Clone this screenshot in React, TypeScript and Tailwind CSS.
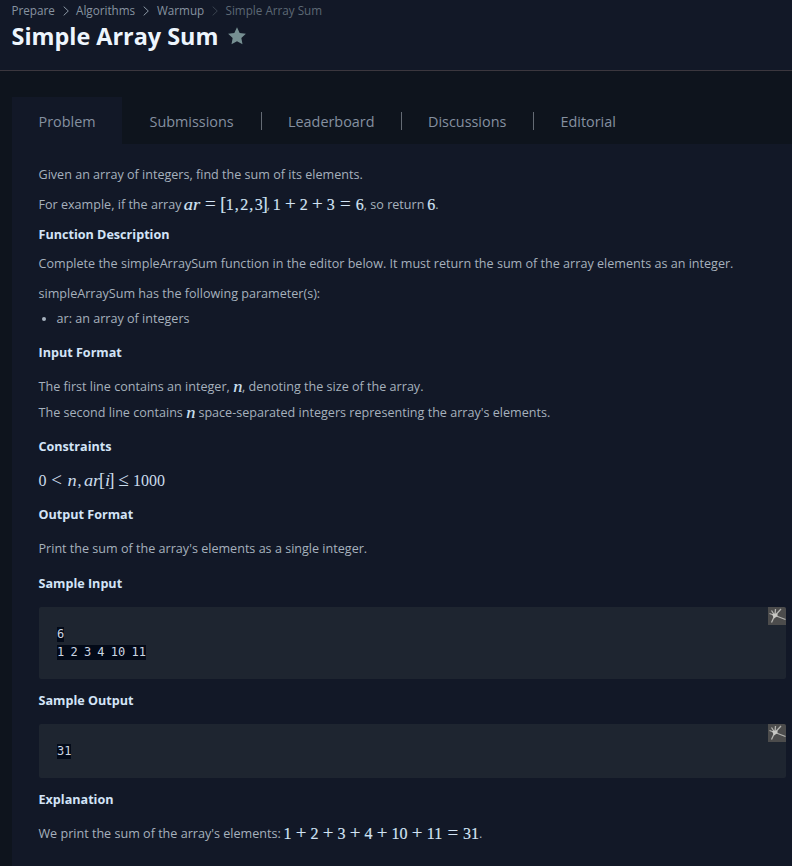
import React from "react";

type Token = [text: string, width: number, italic?: boolean];

function tokenStyle(text: string, italic?: boolean) {
  if (italic) return "justify-center italic text-[16px] scale-x-[1.15]";
  if ("+=<≤".includes(text)) return "justify-center text-[19px]";
  if ("[]".includes(text)) return "justify-center text-[18px]";
  if (text === ",") return "justify-start pl-[1px]";
  return "justify-center";
}

function MathText({ tokens, light = false }: { tokens: Token[]; light?: boolean }) {
  return (
    <span
      className={`relative -top-[0.5px] inline-flex h-[20px] items-baseline whitespace-pre align-top font-['Liberation_Serif',serif] text-[16px] leading-[20px] ${
        light ? "text-[#cbdcec]" : "-ml-[0.5px] text-[#d3e4f5] [-webkit-text-stroke:0.15px]"
      }`}
    >
      <span className="h-[16.4px] w-0" />
      {tokens.map(([text, width, italic], i) => (
        <span key={i} className={`inline-flex shrink-0 ${tokenStyle(text, italic)}`} style={{ width }}>
          {text}
        </span>
      ))}
    </span>
  );
}

function Chevron({ dim = false }: { dim?: boolean }) {
  return (
    <svg width="6" height="10" viewBox="0 0 6 10" fill="none" className={dim ? "text-[#3a4350]" : "text-[#8d99a6]"}>
      <path d="M.7 .6 5.300 5 .7 9.400" stroke="currentColor" strokeWidth="1" />
    </svg>
  );
}

function Heading({ children, className = "" }: { children: React.ReactNode; className?: string }) {
  return <h3 className={`h-[20px] text-[12.6px] font-bold leading-[22px] text-[#d3e4f7] ${className}`}>{children}</h3>;
}

function Line({ children, className = "" }: { children: React.ReactNode; className?: string }) {
  return <p className={`h-[20px] whitespace-nowrap leading-[22px] ${className}`}>{children}</p>;
}

function Burst() {
  return (
    <svg width="18" height="18" viewBox="0 0 18 18" className="shrink-0 rounded-tr-[2px] bg-[#4c4c4c]">
      <g stroke="#b4b4b1" strokeWidth="1.3" fill="none">
        <path d="M7 8.500 1.500 6.500M6.500 8 3.500 3.500M7 8 7.500 2M7.500 8 13 2M7 8.500 17.500 12.500M6.500 9 3.500 15.500" />
      </g>
      <path d="M4 7 9.500 6.500 9.500 9 6 11.500Z" fill="#c9c9c5" />
    </svg>
  );
}

function Sample({ lines, className = "" }: { lines: string[]; className?: string }) {
  return (
    <div className={`ml-[0.5px] flex w-[747px] items-start justify-between rounded-[2px] bg-[#1e2530] ${className}`}>
      <pre className="py-[18px] pl-[18px] font-['DejaVu_Sans_Mono',monospace] text-[12px] leading-[18px] text-[#ccd6e2] [word-spacing:-1px]">
        {lines.map((line) => (
          <span key={line} className="flex h-[18px] items-start pt-[2px]">
            <span className="h-[15px] bg-[#030a18] leading-[15px]">{line}</span>
          </span>
        ))}
      </pre>
      <Burst />
    </div>
  );
}

const tabs = [
  { name: "Submissions", width: "w-[140px]", pad: "pl-[27.500px]" },
  { name: "Leaderboard", width: "w-[140px]", pad: "pl-[26px]" },
  { name: "Discussions", width: "w-[132px]", pad: "pl-[26px]" },
  { name: "Editorial", width: "w-[110px]", pad: "pl-[26.500px]" },
];

export default function App() {
  return (
    <div className="h-[866px] w-[792px] overflow-hidden bg-[#0e141d] font-['Open_Sans',sans-serif] text-[12.58px] text-[#a6b1bd]">
      <header className="h-[71px] border-b border-[#3b373e] bg-[#121827] pl-[11.500px]">
        <nav className="flex h-[21px] items-center text-[11.7px] leading-[21px] text-[#8793a0]">
          <span className="w-[51px]">Prepare</span>
          <Chevron />
          <span className="ml-[7.500px] w-[67px]">Algorithms</span>
          <Chevron />
          <span className="ml-[8px] w-[55px]">Warmup</span>
          <Chevron dim />
          <span className="ml-[7.500px] whitespace-nowrap text-[#5d6875]">Simple Array Sum</span>
        </nav>
        <div className="flex h-[31px] items-center">
          <h1 className="w-[215.500px] whitespace-nowrap text-[23.4px] font-bold leading-[31px] text-[#edf5fd]">
            Simple Array Sum
          </h1>
          <svg width="20" height="20" viewBox="0 0 24 24" fill="#768f92" className="-mt-px">
            <path d="m12 1.500 3.200 6.900 7.500.9-5.500 5.200 1.400 7.500-6.600-3.700-6.600 3.700 1.400-7.500L1.300 9.300l7.500-.9Z" />
          </svg>
        </div>
      </header>
      <div className="pl-[12px] pt-[26px]">
        <div className="flex h-[47px] text-[14.4px] leading-[49px] text-[#8590a0]">
          <div className="w-[110px] bg-[#121827] pl-[26.500px]">Problem</div>
          {tabs.map((tab, i) => (
            <div key={tab.name} className={`flex justify-between ${tab.pad} ${tab.width}`}>
              {tab.name}
              {i < tabs.length - 1 && <span className="mt-[15px] h-[18px] w-px bg-[#646b74]" />}
            </div>
          ))}
        </div>
        <main className="flex h-[722px] flex-col bg-[#121827] pl-[26.500px] pt-[20px]">
          <Line>Given an array of integers, find the sum of its elements.</Line>
          <Line className="mt-[10px]">
            For example, if the array{" "}
            <MathText
              tokens={[
                ["a", 8.5, true], ["r", 7, true], ["=", 21], ["[", 5], ["1", 8], [",", 6.5], ["2", 8], [",", 6.5], ["3", 8], ["]", 4],
              ]}
            />
            ,{" "}
            <MathText tokens={[["1", 8], ["+", 19], ["2", 8], ["+", 19], ["3", 8], ["=", 21], ["6", 8]]} />
            , so return <MathText tokens={[["6", 8]]} />.
          </Line>
          <Heading className="mt-[10px]">Function Description</Heading>
          <Line className="mt-[9px]">
            Complete the simpleArraySum function in the editor below. It must return the sum of the array elements as an integer.
          </Line>
          <Line className="mt-[10px]">simpleArraySum has the following parameter(s):</Line>
          <ul className="mt-[5px] h-[20px] leading-[22px]">
            <li className="flex items-center">
              <span className="ml-[3px] mr-[11px] size-[4px] rounded-full bg-[#a6b1bd]" />
              ar: an array of integers
            </li>
          </ul>
          <Heading className="mt-[14px]">Input Format</Heading>
          <Line className="mt-[14px]">
            The first line contains an integer, <MathText tokens={[["n", 9.5, true]]} />, denoting the size of the array.
          </Line>
          <Line className="mt-[6px]">
            The second line contains <MathText tokens={[["n", 9.5, true]]} /> space-separated integers representing the
            array's elements.
          </Line>
          <Heading className="mt-[14px]">Constraints</Heading>
          <Line className="mt-[14px]">
            <MathText
              light
              tokens={[
                ["0", 8], ["<", 20], ["n", 10, true], [",", 7], ["a", 9, true], ["r", 7, true], ["[", 5], ["i", 5, true],
                ["]", 4], ["≤", 20], ["1000", 31],
              ]}
            />
          </Line>
          <Heading className="mt-[14px]">Output Format</Heading>
          <Line className="mt-[14px]">Print the sum of the array's elements as a single integer.</Line>
          <Heading className="mt-[15px]">Sample Input</Heading>
          <Sample lines={["6", "1 2 3 4 10 11"]} className="mt-[14px] h-[72px]" />
          <Heading className="mt-[11px]">Sample Output</Heading>
          <Sample lines={["31"]} className="mt-[14px] h-[54px]" />
          <Heading className="mt-[11px]">Explanation</Heading>
          <Line className="mt-[14px]">
            We print the sum of the array's elements:{" "}
            <MathText
              tokens={[
                ["1", 8], ["+", 19], ["2", 8], ["+", 19], ["3", 8], ["+", 19], ["4", 8], ["+", 19], ["10", 16], ["+", 19],
                ["11", 16], ["=", 20.5], ["31", 16],
              ]}
            />
            .
          </Line>
        </main>
      </div>
    </div>
  );
}
